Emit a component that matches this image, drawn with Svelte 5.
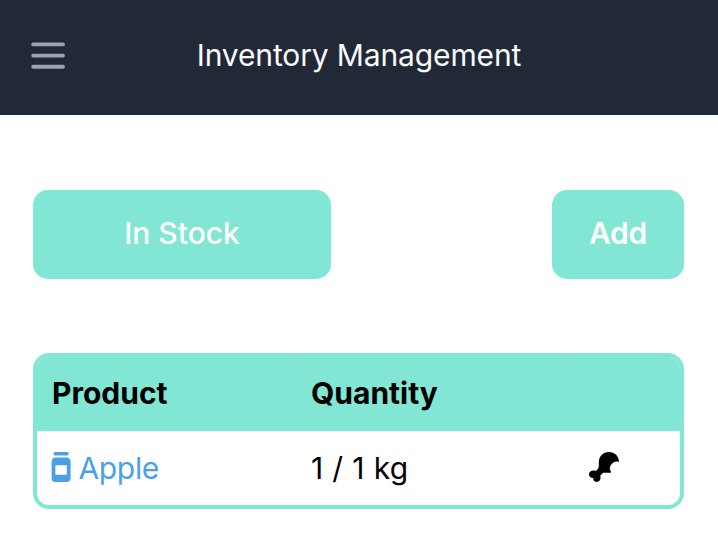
<script>
  const products = [{ name: 'Apple', quantity: '1 / 1 kg' }];
</script>

<header>
  <button class="menu" aria-label="Menu">
    <svg width="34" height="28" viewBox="0 0 34 28" fill="none" stroke="#9ca3af" stroke-width="3.9" stroke-linecap="round">
      <path d="M2.2 2.4H32M2.2 13.6H32M2.2 24.8H32" />
    </svg>
  </button>
  <h1>Inventory Management</h1>
</header>
<main>
  <div class="actions">
    <button class="stock">In Stock</button>
    <button class="add">Add</button>
  </div>
  <section class="table">
    <div class="row head">
      <span class="cell">Product</span>
      <span class="cell">Quantity</span>
      <span class="cell"></span>
    </div>
    {#each products as product}
      <div class="row">
        <span class="cell name">
          <svg width="20" height="30" viewBox="0 0 20 30" fill="currentColor">
            <rect x="2.6" y="0" width="15" height="3.6" rx="1.6" />
            <path fill-rule="evenodd" d="M4 5.6H16Q19.6 6.2 19.6 10V26Q19.6 30 15.6 30H4.4Q.6 30 .6 26V10Q.6 6.2 4 5.6ZM4.4 13.2V22.7H15.8V13.2Z" />
          </svg>
          <span class="label">{product.name}</span>
        </span>
        <span class="cell quantity">{product.quantity}</span>
        <span class="cell icon">
          <svg width="30" height="30" viewBox="0 0 30 30">
            <path d="M9.8 10.5C9.8 4.5 14 0 20 0C25.7 0 30 4.2 30 9.9C27.6 9.3 25.6 9.5 24 10.8C22 12.3 20.8 14.6 20.8 17C20.8 18.2 22.3 18.6 21.9 20.7H14.2L11.2 23.8C12.3 26.8 10.7 29.9 7.6 29.9C5.2 29.9 4 28.1 4.2 26.1C1.8 26.2 0 24.5 0 22.3C0 19 3.6 17.9 6.8 18.9C8.2 17.9 9.8 16.6 9.8 14.5Z" />
          </svg>
        </span>
      </div>
    {/each}
  </section>
</main>

<style>
  :global(body) { background: #fff; font-family: Inter, sans-serif; }
  header { box-sizing: border-box; height: 115px; padding: 0 31px 4px; display: grid; grid-template-columns: 34px 1fr 34px; align-items: center; background: #222936; }
  button { border: 0; padding: 0; font: inherit; }
  .menu { background: none; height: 28px; }
  svg { display: block; }
  h1 { margin: 0; padding-bottom: 1px; text-align: center; color: #f9fafb; font-size: 30px; font-weight: 400; line-height: 44px; letter-spacing: -0.13px; white-space: nowrap; }
  main { padding: 74.5px 34px 0 33px; }
  .actions { display: flex; justify-content: space-between; }
  .actions button { box-sizing: border-box; height: 89px; padding-bottom: 2px; border-radius: 15px; background: #81e6d3; color: #fff; font-size: 30px; font-weight: 500; }
  .actions .stock { width: 298px; }
  .actions .add { width: 132px; font-weight: 600; letter-spacing: -0.3px; }
  .table { box-sizing: border-box; height: 156.4px; margin-top: 74.5px; border: 4px solid #81e6d3; border-radius: 16px; overflow: hidden; font-size: 30px; }
  .row { display: grid; grid-template-columns: 259px 278px 1fr; height: 75px; }
  .head { height: 74px; background: #81e6d3; font-weight: 700; }
  .cell { box-sizing: border-box; display: flex; align-items: center; padding: 0 0 2px 15px; }
  .head .cell + .cell { box-shadow: inset 1px 0 #88e7d5; }
  .name { gap: 7.5px; padding-left: 14px; color: #4a9fe9; }
  .name svg, .icon svg { margin-bottom: 1px; }
  .label { letter-spacing: -0.35px; }
  .quantity { letter-spacing: 0.35px; }
  .icon { padding-left: 15px; }
</style>
